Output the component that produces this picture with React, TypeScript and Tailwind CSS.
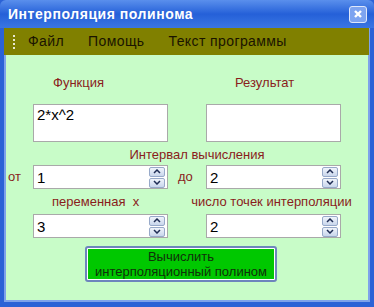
import React from 'react';

const font = { fontFamily: '"Liberation Sans", Arial, sans-serif' };

const Spinner: React.FC = () => (
  <div className="flex flex-col gap-[1px] mr-[2px]">
    <div className="w-[16px] h-[10px] rounded-[2px] border border-[#97a9c9] bg-gradient-to-b from-[#f0f4fb] to-[#c9d6ec] flex items-center justify-center">
      <svg width="8" height="5" viewBox="0 0 8 5"><path d="M1 4 L4 1 L7 4" stroke="#1f2d55" strokeWidth="1.5" fill="none" /></svg>
    </div>
    <div className="w-[16px] h-[10px] rounded-[2px] border border-[#97a9c9] bg-gradient-to-b from-[#f0f4fb] to-[#c9d6ec] flex items-center justify-center">
      <svg width="8" height="5" viewBox="0 0 8 5"><path d="M1 1 L4 4 L7 1" stroke="#1f2d55" strokeWidth="1.5" fill="none" /></svg>
    </div>
  </div>
);

const NumBox: React.FC<{ value: string }> = ({ value }) => (
  <div className="w-[135px] h-[24px] bg-white border border-[#a9a9a9] flex items-center">
    <span className="flex-1 pl-[3px] text-[15px] text-black leading-none">{value}</span>
    <Spinner />
  </div>
);

const App: React.FC = () => {
  return (
    <div className="w-[374px] h-[307px] flex flex-col bg-[#2b62d6] select-none" style={font}>
      {/* title bar */}
      <div className="h-[28px] flex items-center justify-between pl-[8px] pr-[7px] bg-gradient-to-b from-[#5a8fec] via-[#2560d8] to-[#3a76e4] rounded-t-[6px]">
        <span className="text-white font-bold text-[14px] tracking-[0.55px]">Интерполяция полинома</span>
        <div className="w-[18px] h-[17px] rounded-[3px] border border-[#dfe8fb] bg-[#7ea4f0] flex items-center justify-center">
          <svg width="10" height="10" viewBox="0 0 10 10"><path d="M2 2 L8 8 M8 2 L2 8" stroke="white" strokeWidth="2.4" /></svg>
        </div>
      </div>
      {/* body with frame */}
      <div className="flex-1 flex flex-col px-[4px] pb-[5px] bg-[#2b62d6]">
        <div className="flex-1 flex flex-col border-l-[2px] border-r-[2px] border-b-[2px] border-[#7ea2ea]">
          {/* menu bar */}
          <div className="h-[27px] bg-[#808000] flex items-center text-[14px] tracking-[0.4px] text-[#1a1400] -ml-[2px] -mr-[1px]">
            <div className="ml-[9px] mr-[12px] flex flex-col gap-[2px]">
              <div className="w-[2px] h-[2px] bg-[#e8e8d0]" />
              <div className="w-[2px] h-[2px] bg-[#e8e8d0]" />
              <div className="w-[2px] h-[2px] bg-[#e8e8d0]" />
              <div className="w-[2px] h-[2px] bg-[#e8e8d0]" />
            </div>
            <span className="ml-[1px]">Файл</span>
            <span className="ml-[24px]">Помощь</span>
            <span className="ml-[24px]">Текст программы</span>
          </div>
          {/* content */}
          <div className="flex-1 bg-[#c8fcc8] flex flex-col text-[13px] text-[#8a1c1c]">
            <div className="h-[49px] flex items-center pt-[6px]">
              <span className="ml-[47px]">Функция</span>
              <span className="ml-[131px]">Результат</span>
            </div>
            <div className="flex ml-[27px] gap-[38px]">
              <div className="w-[135px] h-[38px] bg-white border border-[#a9a9a9] pl-[3px] pt-[1px] text-[15px] text-black leading-[18px]">2*x^2</div>
              <div className="w-[135px] h-[38px] bg-white border border-[#a9a9a9]" />
            </div>
            <div className="h-[23px] flex items-end justify-center pl-[20px] pb-[1px]">Интервал вычисления</div>
            <div className="flex items-center">
              <span className="w-[27px] pl-[2px]">от</span>
              <NumBox value="1" />
              <span className="w-[38px] pl-[10px]">до</span>
              <NumBox value="2" />
            </div>
            <div className="h-[25px] flex items-center">
              <span className="ml-[46px]">переменная&nbsp; х</span>
              <span className="ml-[52px]">число точек интерполяции</span>
            </div>
            <div className="flex ml-[27px] gap-[38px]">
              <NumBox value="3" />
              <NumBox value="2" />
            </div>
            <div className="flex mt-[8px] ml-[79px]">
              <div className="w-[192px] h-[36px] rounded-[3px] border-[2px] border-[#6d85bd] p-[1px] bg-white">
                <div className="w-full h-full bg-[#00c800] flex flex-col items-center justify-center text-[13px] leading-[15px] text-[#10300a]">
                  <span>Вычислить</span>
                  <span>интерполяционный полином</span>
                </div>
              </div>
            </div>
          </div>
        </div>
      </div>
    </div>
  );
};

export default App;
